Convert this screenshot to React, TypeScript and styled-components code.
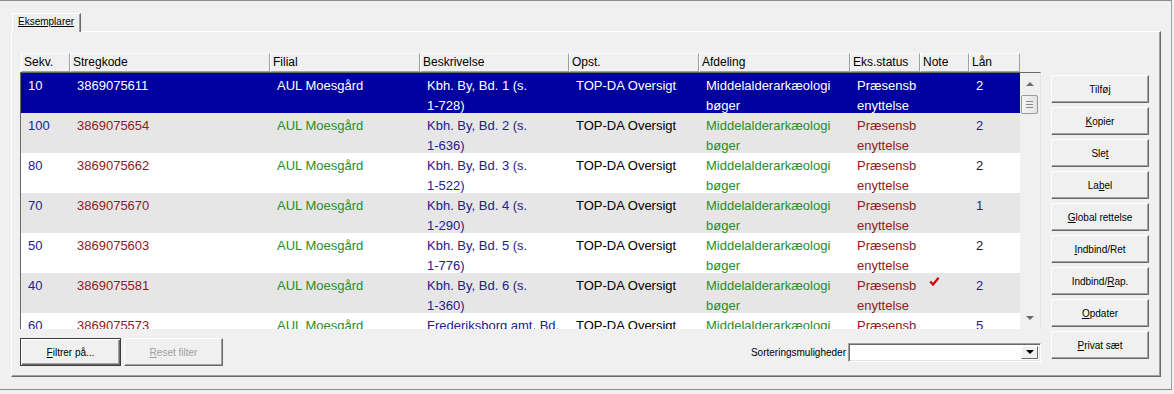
import React from 'react';
import styled, { createGlobalStyle } from 'styled-components';

const Global = createGlobalStyle`
  html, body { margin: 0; padding: 0; background: #f0f0f0; }
  body { font-family: "Liberation Sans", Arial, sans-serif; }
  * { box-sizing: border-box; }
`;

const Window = styled.div`
  width: 1172px;
  height: 390px;
  border-top: 1px solid #8c8c8c;
  border-right: 1px solid #a0a0a0;
  border-bottom: 1px solid #8c8c8c;
  padding: 12px 0 0 11px;
  display: flex;
  flex-direction: column;
`;

const TabStrip = styled.div`
  display: flex;
  height: 18px;
  padding-left: 1px;
`;

const Tab = styled.div`
  position: relative;
  z-index: 1;
  width: 69px;
  height: 19px;
  margin-bottom: -1px;
  background: #f0f0f0;
  border-top: 1px solid #fff;
  border-left: 1px solid #fff;
  border-right: 1px solid #696969;
  box-shadow: inset -1px 0 #a0a0a0;
  font-size: 10px;
  line-height: 16px;
  padding-left: 5px;
  color: #000;
  u { text-decoration: underline; }
`;

const TabPage = styled.div`
  width: 1150px;
  height: 346px;
  border-top: 1px solid #fff;
  border-left: 1px solid #fff;
  border-right: 1px solid #696969;
  border-bottom: 1px solid #696969;
  box-shadow: inset -1px -1px #a0a0a0;
  padding: 21px 0 0 8px;
  display: flex;
  gap: 10px;
`;

const LeftCol = styled.div`
  width: 1021px;
  display: flex;
  flex-direction: column;
`;

const HeaderRow = styled.div`
  display: flex;
  height: 19px;
  margin-left: 1px;
  width: 999px;
`;

const HeaderCell = styled.div<{ $w: number }>`
  width: ${p => p.$w}px;
  flex: none;
  height: 19px;
  background: #f0f0f0;
  border-top: 1px solid #fbfbfb;
  border-left: 1px solid #fff;
  border-right: 1px solid #a0a0a0;
  border-bottom: 1px solid #a0a0a0;
  font-size: 12px;
  line-height: 17px;
  padding-left: 2px;
  color: #000;
  white-space: nowrap;
  overflow: hidden;
`;

const GridBody = styled.div`
  height: 257px;
  display: flex;
  border-top: 1px solid #696969;
  border-left: 1px solid #696969;
  border-right: 1px solid #e3e3e3;
`;

const RowsArea = styled.div`
  width: 999px;
  height: 256px;
  overflow: hidden;
  background: #fff;
`;

const Row = styled.div<{ $sel?: boolean; $alt?: boolean }>`
  position: relative;
  display: flex;
  height: 40px;
  background: ${p => (p.$sel ? '#0000a0' : p.$alt ? '#e6e6e6' : '#fff')};
`;

const Cell = styled.div<{ $w: number; $c: string; $sel?: boolean }>`
  width: ${p => p.$w}px;
  flex: none;
  padding: 3px 0 0 7px;
  font-size: 13px;
  line-height: 20px;
  white-space: pre;
  overflow: hidden;
  color: ${p => (p.$sel ? '#fff' : p.$c)};
`;

const NoteMark = styled.svg`
  display: block;
  margin: 1px 0 0 2px;
`;

const Scrollbar = styled.div`
  width: 20px;
  display: flex;
  flex-direction: column;
  background: #f0f0f0;
`;

const Arrow = styled.div<{ $down?: boolean }>`
  height: 22px;
  display: flex;
  align-items: center;
  justify-content: center;
  &::after {
    content: '';
    width: 0;
    height: 0;
    border-left: 4px solid transparent;
    border-right: 4px solid transparent;
    ${p => (p.$down ? 'border-top: 4px solid #6a6a6a;' : 'border-bottom: 4px solid #6a6a6a;')}
  }
`;

const Track = styled.div`
  flex: 1;
`;

const Thumb = styled.div`
  width: 17px;
  height: 19px;
  margin-left: 1px;
  border: 1px solid #9a9a9a;
  border-radius: 2px;
  background: linear-gradient(to right, #f6f6f6, #e2e2e2);
  display: flex;
  flex-direction: column;
  align-items: center;
  justify-content: center;
  gap: 2px;
  span {
    display: block;
    width: 7px;
    height: 1px;
    background: #8a8a8a;
  }
`;

const BottomBar = styled.div`
  margin-top: 9px;
  height: 28px;
  display: flex;
  align-items: center;
`;

const Btn = styled.div<{ $w: number; $default?: boolean; $disabled?: boolean }>`
  width: ${p => p.$w}px;
  height: 28px;
  flex: none;
  display: flex;
  align-items: center;
  justify-content: center;
  font-size: 10px;
  background: #f0f0f0;
  color: ${p => (p.$disabled ? '#a0a0a0' : '#000')};
  border: 1px solid;
  border-color: ${p => (p.$default ? '#3c3c3c' : '#fff #696969 #696969 #fff')};
  box-shadow: ${p =>
    p.$default
      ? 'inset 1px 1px #fff, inset -1px -1px #696969, inset -2px -2px #a0a0a0'
      : 'inset -1px -1px #a0a0a0'};
  u { text-decoration: underline; }
`;

const Spacer = styled.div`
  flex: 1;
`;

const SortLabel = styled.span`
  font-size: 10px;
  color: #000;
  margin-right: 2px;
`;

const Select = styled.div`
  width: 193px;
  height: 19px;
  background: #fff;
  border: 1px solid;
  border-color: #a0a0a0 #fff #fff #a0a0a0;
  box-shadow: inset 1px 1px #696969, inset -1px -1px #e3e3e3;
  display: flex;
  justify-content: flex-end;
  align-items: center;
  padding-right: 2px;
`;

const SelectBtn = styled.div`
  width: 17px;
  height: 13px;
  background: #f0f0f0;
  border: 1px solid;
  border-color: #fff #696969 #696969 #fff;
  display: flex;
  align-items: center;
  justify-content: center;
  &::after {
    content: '';
    border-left: 4px solid transparent;
    border-right: 4px solid transparent;
    border-top: 4px solid #000;
  }
`;

const RightCol = styled.div`
  width: 98px;
  padding-top: 22px;
  display: flex;
  flex-direction: column;
  gap: 4px;
`;

const COLS = [49, 200, 150, 149, 130, 151, 70, 49, 51];
const HEADERS = ['Sekv.', 'Stregkode', 'Filial', 'Beskrivelse', 'Opst.', 'Afdeling', 'Eks.status', 'Note', 'Lån'];

const NAVY = '#22228c';
const RED = '#8c1c1c';
const GREEN = '#2a8c2a';
const BLACK = '#000';

type R = { sekv: string; code: string; desc: string; lan: string; lanC: string; note?: boolean };

const ROWS: R[] = [
  { sekv: '10', code: '3869075611', desc: 'Kbh. By, Bd. 1 (s.\n1-728)', lan: '2', lanC: NAVY },
  { sekv: '100', code: '3869075654', desc: 'Kbh. By, Bd. 2 (s.\n1-636)', lan: '2', lanC: NAVY },
  { sekv: '80', code: '3869075662', desc: 'Kbh. By, Bd. 3 (s.\n1-522)', lan: '2', lanC: '#202030' },
  { sekv: '70', code: '3869075670', desc: 'Kbh. By, Bd. 4 (s.\n1-290)', lan: '1', lanC: NAVY },
  { sekv: '50', code: '3869075603', desc: 'Kbh. By, Bd. 5 (s.\n1-776)', lan: '2', lanC: '#202030' },
  { sekv: '40', code: '3869075581', desc: 'Kbh. By, Bd. 6 (s.\n1-360)', lan: '2', lanC: NAVY, note: true },
  { sekv: '60', code: '3869075573', desc: 'Frederiksborg amt, Bd.\n1', lan: '5', lanC: NAVY },
];

const RIGHT_BUTTONS: [string, string, string][] = [
  ['Tilfø', 'j', ''],
  ['', 'K', 'opier'],
  ['Sle', 't', ''],
  ['La', 'b', 'el'],
  ['', 'G', 'lobal rettelse'],
  ['', 'I', 'ndbind/Ret'],
  ['Indbind/', 'R', 'ap.'],
  ['', 'O', 'pdater'],
  ['', 'P', 'rivat sæt'],
];

export default function App() {
  return (
    <>
      <Global />
      <Window>
        <TabStrip>
          <Tab>
            <u>Eksemplarer</u>
          </Tab>
        </TabStrip>
        <TabPage>
          <LeftCol>
            <HeaderRow>
              {HEADERS.map((h, i) => (
                <HeaderCell key={h} $w={COLS[i]}>
                  {h}
                </HeaderCell>
              ))}
            </HeaderRow>
            <GridBody>
              <RowsArea>
                {ROWS.map((r, i) => {
                  const sel = i === 0;
                  const alt = i % 2 === 1;
                  return (
                    <Row key={r.code} $sel={sel} $alt={alt}>
                      <Cell $w={COLS[0]} $c={NAVY} $sel={sel}>{r.sekv}</Cell>
                      <Cell $w={COLS[1]} $c={RED} $sel={sel}>{r.code}</Cell>
                      <Cell $w={COLS[2]} $c={GREEN} $sel={sel}>AUL Moesgård</Cell>
                      <Cell $w={COLS[3]} $c={NAVY} $sel={sel}>{r.desc}</Cell>
                      <Cell $w={COLS[4]} $c={BLACK} $sel={sel}>TOP-DA Oversigt</Cell>
                      <Cell $w={COLS[5]} $c={GREEN} $sel={sel}>{'Middelalderarkæologi\nbøger'}</Cell>
                      <Cell $w={COLS[6]} $c={RED} $sel={sel}>{'Præsensb\nenyttelse'}</Cell>
                      <Cell $w={COLS[7]} $c={BLACK} $sel={sel}>
                        {r.note && (
                          <NoteMark width="11" height="9" viewBox="0 0 11 9">
                            <path d="M1.2 4.6 L4 7.6 L9.6 0.8" stroke="#d00000" strokeWidth="2.2" fill="none" />
                          </NoteMark>
                        )}
                      </Cell>
                      <Cell $w={COLS[8]} $c={r.lanC} $sel={sel}>{r.lan}</Cell>
                    </Row>
                  );
                })}
              </RowsArea>
              <Scrollbar>
                <Arrow />
                <Thumb>
                  <span />
                  <span />
                  <span />
                </Thumb>
                <Track />
                <Arrow $down />
              </Scrollbar>
            </GridBody>
            <BottomBar>
              <Btn $w={101} $default>
                <span>
                  <u>F</u>iltrer på...
                </span>
              </Btn>
              <Btn $w={99} $disabled style={{ marginLeft: 3 }}>
                <span>
                  <u>R</u>eset filter
                </span>
              </Btn>
              <Spacer />
              <SortLabel>Sorteringsmuligheder</SortLabel>
              <Select>
                <SelectBtn />
              </Select>
            </BottomBar>
          </LeftCol>
          <RightCol>
            {RIGHT_BUTTONS.map(([a, m, b]) => (
              <Btn key={a + m + b} $w={98}>
                <span>
                  {a}
                  <u>{m}</u>
                  {b}
                </span>
              </Btn>
            ))}
          </RightCol>
        </TabPage>
      </Window>
    </>
  );
}
